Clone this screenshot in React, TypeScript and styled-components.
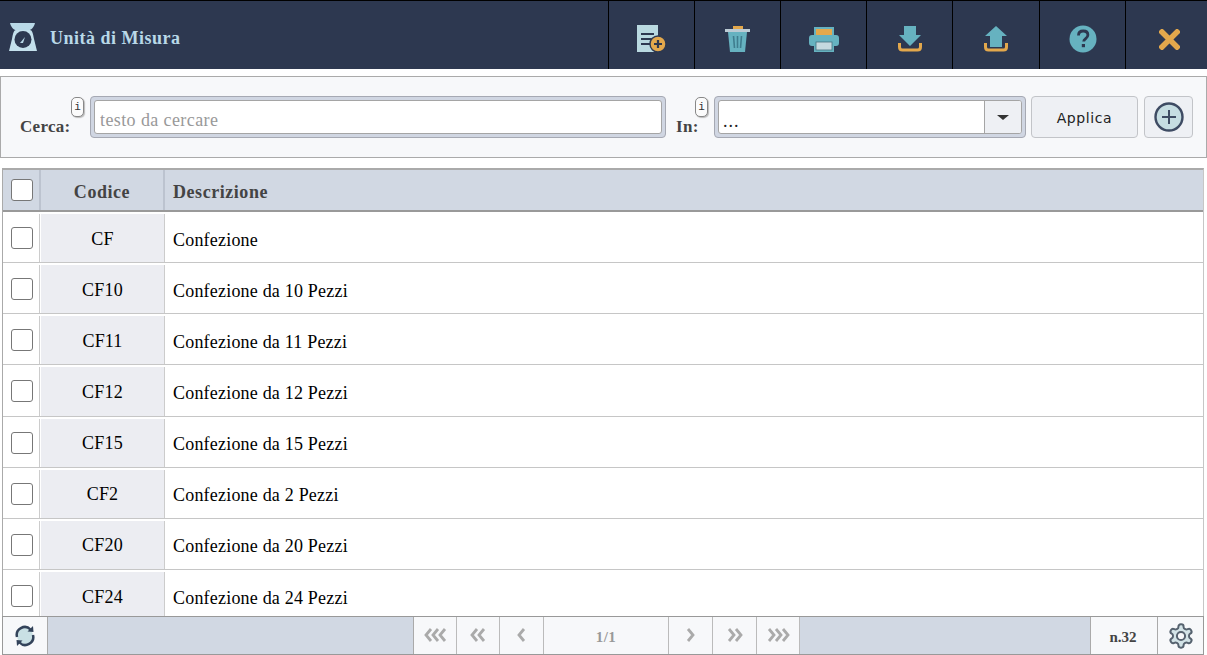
import React from "react";
import styled, { createGlobalStyle } from "styled-components";

const Global = createGlobalStyle`
  html, body { margin: 0; padding: 0; background: #fff; overflow: hidden; }
  body { font-family: "Liberation Serif", "Times New Roman", serif; }
  * { box-sizing: border-box; }
`;

const Page = styled.div`
  width: 1207px;
  height: 655px;
  display: flex;
  flex-direction: column;
`;

const Header = styled.header`
  height: 69px;
  flex: none;
  display: flex;
  background: #2d3850;
  border-top: 1px solid #000;
`;

const TitleArea = styled.div`
  flex: 1;
  display: flex;
  align-items: center;
  padding: 4px 0 0 9px;
  gap: 13px;
`;

const Title = styled.h1`
  margin: 3px 0 0;
  font-size: 18px;
  font-weight: bold;
  letter-spacing: 0.5px;
  color: #b9d9e8;
`;

const ToolButton = styled.button<{ $w?: number; $shift?: number }>`
  width: ${(p) => p.$w ?? 86}px;
  height: 68px;
  flex: none;
  padding: 8px 0 0 ${(p) => p.$shift ?? 0}px;
  border: 0;
  border-left: 1px solid #000;
  background: transparent;
  display: flex;
  align-items: center;
  justify-content: center;
`;

const SearchPanel = styled.section`
  margin-top: 7px;
  height: 82px;
  flex: none;
  border: 1px solid #aaa;
  background: #f7f8fa;
  display: flex;
  align-items: flex-start;
  padding: 19px 13px 0 19px;
`;

const FieldLabel = styled.label<{ $w: number }>`
  position: relative;
  width: ${(p) => p.$w}px;
  height: 42px;
  flex: none;
  font-size: 17px;
  font-weight: bold;
  letter-spacing: 0.3px;
  color: #444;
  display: flex;
  align-items: flex-end;
  padding-bottom: 3px;
  line-height: 17px;
`;

const InfoBadge = styled.span`
  position: absolute;
  top: 1px;
  right: 6px;
  width: 13px;
  height: 20px;
  border: 1px solid #888;
  border-radius: 5px;
  background: #fbfbfb;
  box-shadow: 1px 1px 1px #bbb;
  font: normal 11px/18px "Liberation Mono", monospace;
  letter-spacing: 0;
  color: #333;
  text-align: center;
`;

const FieldFrame = styled.div<{ $w: number }>`
  width: ${(p) => p.$w}px;
  height: 42px;
  flex: none;
  padding: 3px;
  border: 1px solid #a6a9b3;
  border-radius: 4px;
  background: #d0d6e2;
  display: flex;
`;

const TextField = styled.input`
  flex: 1;
  min-width: 0;
  border: 1px solid #a5a5a5;
  border-radius: 3px;
  padding: 6px 5px 0;
  background: #fff;
  font: 18px "Liberation Serif", serif;
  letter-spacing: 0.4px;
  outline: none;
  &::placeholder { color: #999; opacity: 1; }
`;

const SelectBox = styled.div`
  flex: 1;
  display: flex;
  border: 1px solid #a5a5a5;
  border-radius: 3px;
  background: #fff;
  overflow: hidden;
`;

const SelectValue = styled.div`
  flex: 1;
  padding: 8px 4px 0;
  font-size: 18px;
  letter-spacing: 1px;
  line-height: 24px;
  color: #222;
`;

const SelectArrow = styled.div`
  width: 37px;
  flex: none;
  border-left: 1px solid #a5a5a5;
  background: #eef0f4;
  display: flex;
  align-items: center;
  justify-content: center;
  &::before {
    content: "";
    border-left: 6px solid transparent;
    border-right: 6px solid transparent;
    border-top: 5px solid #333;
  }
`;

const ApplyButton = styled.button`
  margin-left: 5px;
  width: 107px;
  height: 42px;
  flex: none;
  border: 1px solid #c2c4c8;
  border-radius: 4px;
  background: #eef0f4;
  font: 14px "DejaVu Sans", sans-serif;
  letter-spacing: 0.6px;
  color: #222;
  padding: 1px 0 0;
`;

const PlusButton = styled.button`
  margin-left: 6px;
  width: 49px;
  height: 42px;
  flex: none;
  border: 1px solid #c2c4c8;
  border-radius: 4px;
  background: #eef0f4;
  padding: 0;
  display: flex;
  align-items: center;
  justify-content: center;
`;

const TableArea = styled.div`
  margin: 10px 3px 0 2px;
  flex: 1;
  min-height: 0;
  display: flex;
  flex-direction: column;
  overflow: hidden;
`;

const Grid = styled.div`
  flex: 1;
  min-height: 0;
  overflow: hidden;
  border-top: 2px solid #aaa;
  border-left: 1px solid #aaa;
  border-right: 1px solid #c6c6c6;
`;

const HeadRow = styled.div`
  height: 42px;
  display: grid;
  grid-template-columns: 38px 124px 1fr;
  background: #d1d8e3;
  border-bottom: 2px solid #999;
`;

const HeadCell = styled.div<{ $center?: boolean }>`
  display: flex;
  align-items: center;
  justify-content: ${(p) => (p.$center ? "center" : "flex-start")};
  padding: 5px 0 0 ${(p) => (p.$center ? 0 : 8)}px;
  border-right: 2px solid #bcc3cf;
  font-size: 18px;
  font-weight: bold;
  letter-spacing: 0.55px;
  color: #444;
  &:last-child { border-right: 0; }
`;

const HeadCheckCell = styled(HeadCell)`
  padding: 0 0 0 2px;
`;

const Row = styled.div`
  height: 51.15px;
  display: grid;
  grid-template-columns: 38px 123px 1fr;
  background: #fff;
  border-bottom: 1px solid #c6c6c6;
`;

const CheckCell = styled.div`
  display: flex;
  align-items: center;
  justify-content: center;
  margin: 2px 1px 0 0;
  padding: 0 0 0 1px;
  border-right: 1px solid #ccc;
`;

const Check = styled.span`
  width: 22px;
  height: 22px;
  border: 1px solid #777;
  border-radius: 3px;
  background: #fff;
  display: block;
`;

const CodeCell = styled.div`
  display: flex;
  align-items: center;
  justify-content: center;
  padding-top: 2px;
  background: #ecedf2;
  font-size: 18px;
  letter-spacing: 0.2px;
  color: #000;
  margin: 2px 0 0;
`;

const DescCell = styled.div`
  display: flex;
  align-items: center;
  padding: 4px 0 0 8px;
  font-size: 18px;
  letter-spacing: 0.2px;
  color: #000;
  margin: 2px 0 0;
  border-left: 1px solid #ccc;
`;

const Footer = styled.footer`
  height: 39px;
  flex: none;
  display: flex;
  background: #d1d8e3;
  border: 1px solid #999;
`;

const FootCell = styled.div<{ $w: number; $divided?: boolean }>`
  width: ${(p) => p.$w}px;
  flex: none;
  display: flex;
  align-items: center;
  justify-content: center;
  background: #f7f8fa;
  border-right: 1px solid #aaa;
  border-left: ${(p) => (p.$divided ? "1px solid #aaa" : "0")};
  &:last-child { border-right: 0; }
`;

const Spacer = styled.div<{ $w?: number }>`
  flex: ${(p) => (p.$w ? "none" : 1)};
  width: ${(p) => (p.$w ? `${p.$w}px` : "auto")};
`;

const Pager = styled.div`
  display: flex;
  flex: none;
  border-left: 1px solid #aaa;
`;

const PageBtn = styled.div<{ $w?: number }>`
  width: ${(p) => p.$w ?? 44}px;
  flex: none;
  display: flex;
  align-items: center;
  justify-content: center;
  padding-bottom: 2px;
  background: #f7f8fa;
  border-right: 1px solid #bbb;
`;

const PageText = styled.span`
  font-size: 15px;
  letter-spacing: 0.5px;
  color: #999;
  font-weight: bold;
  padding-top: 5px;
`;

const CountText = styled.span`
  font-size: 15px;
  font-weight: bold;
  color: #444;
  padding: 3px 2px 0 0;
`;

const teal = "#66b2c0";
const orange = "#e3a84c";
const pale = "#b9d9e0";

const ScaleIcon = () => (
  <svg width="28" height="30" viewBox="0 0 28 30">
    <path d="M1 1h25c-1 5-5 8-9 8H10C6 9 2 6 1 1z" fill="#b9d9e8" />
    <path d="M7 8h14c2 0 3 3 4 9l3 12H0l3-12c1-6 2-9 4-9z" fill="#c4e0ec" />
    <circle cx="14" cy="17.5" r="8.5" fill="#2d3850" />
    <path d="M11 21l5-6-2 6z" fill="#b9d9e8" />
  </svg>
);

const NewDocIcon = () => (
  <svg width="30" height="28" viewBox="0 0 30 28">
    <path d="M0 0h21v27H0z" fill={pale} />
    <path d="M4 9h13M4 14h13M4 19h13" stroke="#2d3850" strokeWidth="2.2" />
    <circle cx="21" cy="19" r="8" fill={orange} stroke="#2d3850" strokeWidth="1.4" />
    <path d="M21 15v8M17 19h8" stroke="#2d3850" strokeWidth="2.2" />
  </svg>
);

const TrashIcon = () => (
  <svg width="26" height="27" viewBox="0 0 26 27">
    <rect x="8" y="0" width="10" height="3" fill={orange} />
    <rect x="0" y="3" width="25" height="3" fill="#bccbd4" />
    <path d="M3 6h19l-2 20H5z" fill={teal} />
    <path d="M8.5 10l1 12M12.5 10v12M16.5 10l-1 12" stroke="#3f7d8e" strokeWidth="1.6" />
  </svg>
);

const PrinterIcon = () => (
  <svg width="30" height="25" viewBox="0 0 30 25">
    <path d="M5 0h20v8h2c2 0 3 1 3 3v5c0 2-1 3-3 3h-2v6H5v-6H3c-2 0-3-1-3-3v-5c0-2 1-3 3-3h2z" fill={teal} />
    <rect x="7" y="2" width="16" height="6" fill={orange} />
    <rect x="7" y="15" width="16" height="8" fill="#c5d9df" stroke="#46707f" strokeWidth="0.8" />
  </svg>
);

const DownloadIcon = () => (
  <svg width="24" height="26" viewBox="0 0 24 26">
    <path d="M6 0h12v9h5L12 20 1 9h5z" fill={teal} />
    <path d="M1.5 17v4c0 2 1 3 3 3h15c2 0 3-1 3-3v-4" fill="none" stroke={orange} strokeWidth="3" />
  </svg>
);

const UploadIcon = () => (
  <svg width="24" height="26" viewBox="0 0 24 26">
    <path d="M12 0l11 10h-5v11H6V10H1z" fill={teal} />
    <path d="M1.5 17v4c0 2 1 3 3 3h15c2 0 3-1 3-3v-4" fill="none" stroke={orange} strokeWidth="3" />
  </svg>
);

const HelpIcon = () => (
  <svg width="28" height="28" viewBox="0 0 28 28">
    <circle cx="14" cy="14" r="13.5" fill={teal} />
    <path d="M9.5 10.5c0-3 2-4.500 4.700-4.500s4.700 1.500 4.700 4c0 3.500-4.200 3.500-4.200 6.500" fill="none" stroke="#2d3850" strokeWidth="2.8" />
    <rect x="12.800" y="19" width="3.200" height="3.200" fill="#2d3850" />
  </svg>
);

const CloseIcon = () => (
  <svg width="21" height="21" viewBox="0 0 21 21">
    <path d="M3 3l15 15M18 3L3 18" stroke={orange} strokeWidth="5.500" strokeLinecap="square" />
  </svg>
);

const PlusIcon = () => (
  <svg width="30" height="30" viewBox="0 0 30 30">
    <circle cx="15" cy="15" r="13.500" fill="#c6dde2" stroke="#3e4b63" strokeWidth="2.400" />
    <path d="M15 8v14M8 15h14" stroke="#3e4b63" strokeWidth="2" />
  </svg>
);

const RefreshIcon = () => (
  <svg width="22" height="24" viewBox="0 0 22 24">
    <circle cx="11" cy="12" r="8" fill="#c9e0e4" />
    <path d="M3 13A8 8 0 0 1 16.500 5.500" fill="none" stroke="#33435a" strokeWidth="2.500" />
    <path d="M19 11A8 8 0 0 1 5.500 18.500" fill="none" stroke="#33435a" strokeWidth="2.500" />
    <path d="M13.500 7.500L19.500 8 19 2z" fill="#33435a" />
    <path d="M8.500 16.500L2.500 16 3 22z" fill="#33435a" />
  </svg>
);

const GearIcon = () => (
  <svg width="28" height="28" viewBox="0 0 24 24" fill="#d3e3e7" stroke="#56626f" strokeWidth="1.700">
    <path d="M12.220 2h-.44a2 2 0 0 0-2 2v.18a2 2 0 0 1-1 1.730l-.43.25a2 2 0 0 1-2 0l-.15-.08a2 2 0 0 0-2.730.730l-.22.380a2 2 0 0 0 .730 2.730l.15.100a2 2 0 0 1 1 1.720v.51a2 2 0 0 1-1 1.740l-.15.090a2 2 0 0 0-.730 2.730l.22.380a2 2 0 0 0 2.730.730l.15-.080a2 2 0 0 1 2 0l.43.250a2 2 0 0 1 1 1.730V20a2 2 0 0 0 2 2h.44a2 2 0 0 0 2-2v-.18a2 2 0 0 1 1-1.730l.43-.25a2 2 0 0 1 2 0l.15.080a2 2 0 0 0 2.730-.730l.22-.390a2 2 0 0 0-.730-2.730l-.15-.080a2 2 0 0 1-1-1.740v-.500a2 2 0 0 1 1-1.740l.15-.090a2 2 0 0 0 .730-2.730l-.22-.380a2 2 0 0 0-2.730-.730l-.15.080a2 2 0 0 1-2 0l-.43-.250a2 2 0 0 1-1-1.730V4a2 2 0 0 0-2-2z" />
    <circle cx="12" cy="12" r="3.500" fill="#f7f8fa" />
  </svg>
);

const Chevrons = ({ count, dir }: { count: number; dir: "left" | "right" }) => {
  const w = 9 + (count - 1) * 7;
  const points = Array.from({ length: count }, (_, i) => i * 7);
  return (
    <svg width={w} height="14" viewBox={`0 0 ${w} 14`} fill="none" stroke="#aaa" strokeWidth="2.800">
      {points.map((x) => (
        <path key={x} d={dir === "left" ? `M${x + 7} 1L${x + 2} 7l5 6` : `M${x + 2} 1l5 6-5 6`} />
      ))}
    </svg>
  );
};

const rows: [string, string][] = [
  ["CF", "Confezione"],
  ["CF10", "Confezione da 10 Pezzi"],
  ["CF11", "Confezione da 11 Pezzi"],
  ["CF12", "Confezione da 12 Pezzi"],
  ["CF15", "Confezione da 15 Pezzi"],
  ["CF2", "Confezione da 2 Pezzi"],
  ["CF20", "Confezione da 20 Pezzi"],
  ["CF24", "Confezione da 24 Pezzi"],
];

export default function App() {
  return (
    <Page>
      <Global />
      <Header>
        <TitleArea>
          <ScaleIcon />
          <Title>Unità di Misura</Title>
        </TitleArea>
        <ToolButton><NewDocIcon /></ToolButton>
        <ToolButton><TrashIcon /></ToolButton>
        <ToolButton><PrinterIcon /></ToolButton>
        <ToolButton><DownloadIcon /></ToolButton>
        <ToolButton $w={87}><UploadIcon /></ToolButton>
        <ToolButton><HelpIcon /></ToolButton>
        <ToolButton $w={82} $shift={5}><CloseIcon /></ToolButton>
      </Header>
      <SearchPanel>
        <FieldLabel $w={70}>Cerca:<InfoBadge>i</InfoBadge></FieldLabel>
        <FieldFrame $w={576}>
          <TextField placeholder="testo da cercare" />
        </FieldFrame>
        <Spacer $w={10} />
        <FieldLabel $w={38}>In:<InfoBadge>i</InfoBadge></FieldLabel>
        <FieldFrame $w={312}>
          <SelectBox>
            <SelectValue>...</SelectValue>
            <SelectArrow />
          </SelectBox>
        </FieldFrame>
        <ApplyButton>Applica</ApplyButton>
        <PlusButton><PlusIcon /></PlusButton>
      </SearchPanel>
      <TableArea>
        <Grid>
          <HeadRow>
            <HeadCheckCell $center><Check /></HeadCheckCell>
            <HeadCell $center>Codice</HeadCell>
            <HeadCell>Descrizione</HeadCell>
          </HeadRow>
          {rows.map(([code, desc]) => (
            <Row key={code}>
              <CheckCell><Check /></CheckCell>
              <CodeCell>{code}</CodeCell>
              <DescCell>{desc}</DescCell>
            </Row>
          ))}
        </Grid>
        <Footer>
          <FootCell $w={45}><RefreshIcon /></FootCell>
          <Spacer $w={365} />
          <Pager>
            <PageBtn $w={43}><Chevrons count={3} dir="left" /></PageBtn>
            <PageBtn $w={43}><Chevrons count={2} dir="left" /></PageBtn>
            <PageBtn><Chevrons count={1} dir="left" /></PageBtn>
            <PageBtn $w={125}><PageText>1/1</PageText></PageBtn>
            <PageBtn><Chevrons count={1} dir="right" /></PageBtn>
            <PageBtn><Chevrons count={2} dir="right" /></PageBtn>
            <PageBtn $w={43}><Chevrons count={3} dir="right" /></PageBtn>
          </Pager>
          <Spacer />
          <FootCell $w={68} $divided><CountText>n.32</CountText></FootCell>
          <FootCell $w={45}><GearIcon /></FootCell>
        </Footer>
      </TableArea>
    </Page>
  );
}
